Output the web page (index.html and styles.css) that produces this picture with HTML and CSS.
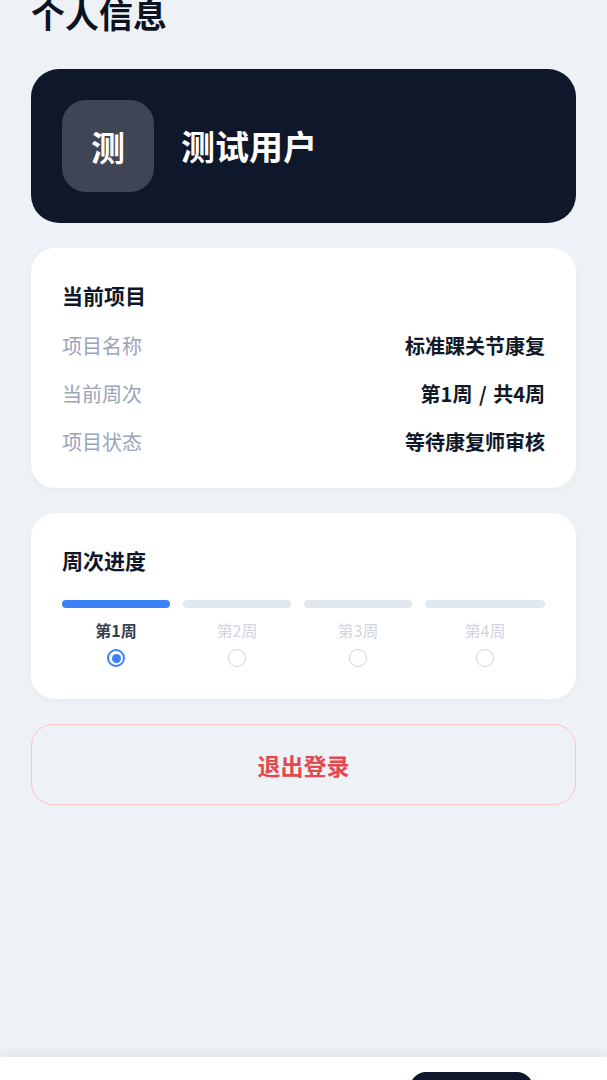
FILE: index.html
```html
<!DOCTYPE html>
<html lang="zh-CN">
<head>
<meta charset="utf-8">
<title>个人信息</title>
<link rel="stylesheet" href="styles.css">
</head>
<body>
<main class="page">
  <h1 class="page-title">个人信息</h1>

  <section class="profile-card">
    <div class="avatar">测</div>
    <div class="profile-name">测试用户</div>
  </section>

  <section class="card">
    <h2 class="card-title">当前项目</h2>
    <div class="rows">
      <div class="row"><span class="row-label">项目名称</span><span class="row-value">标准踝关节康复</span></div>
      <div class="row"><span class="row-label">当前周次</span><span class="row-value">第1周 / 共4周</span></div>
      <div class="row"><span class="row-label">项目状态</span><span class="row-value">等待康复师审核</span></div>
    </div>
  </section>

  <section class="card">
    <h2 class="card-title">周次进度</h2>
    <div class="weeks">
      <div class="week active"><div class="week-bar"></div><div class="week-label">第1周</div><div class="week-radio"></div></div>
      <div class="week"><div class="week-bar"></div><div class="week-label">第2周</div><div class="week-radio"></div></div>
      <div class="week"><div class="week-bar"></div><div class="week-label">第3周</div><div class="week-radio"></div></div>
      <div class="week"><div class="week-bar"></div><div class="week-label">第4周</div><div class="week-radio"></div></div>
    </div>
  </section>

  <button class="logout" type="button">退出登录</button>
</main>

<nav class="tabbar">
  <div class="tab-pill"></div>
</nav>
</body>
</html>
```

FILE: styles.css
```css
* { box-sizing: border-box; }

html, body {
  margin: 0;
  padding: 0;
  background: #eef2f7;
  font-family: "Noto Sans CJK SC", "Noto Sans", "Liberation Sans", sans-serif;
  color: #0f172a;
}

.page {
  padding: 0 31px 120px;
}

.page-title {
  margin: -3px 0 38px;
  font-size: 34px;
  line-height: 34px;
  font-weight: 700;
  color: #0b1220;
}

.profile-card {
  height: 154px;
  background: #0f172a;
  border-radius: 28px;
  padding: 0 31px;
  display: flex;
  align-items: center;
  gap: 27px;
}

.avatar {
  width: 92px;
  height: 92px;
  border-radius: 24px;
  background: #3f4555;
  color: #ffffff;
  font-size: 34px;
  font-weight: 700;
  display: flex;
  align-items: center;
  justify-content: center;
}

.profile-name {
  color: #ffffff;
  font-size: 34px;
  font-weight: 700;
  line-height: 40px;
}

.card {
  margin-top: 25px;
  background: #ffffff;
  border-radius: 24px;
  padding: 32px 31px 32px;
  box-shadow: 0 2px 10px rgba(15, 23, 42, 0.03);
}

.card-title {
  margin: 0 0 22px;
  font-size: 21px;
  line-height: 30px;
  font-weight: 700;
  color: #0f172a;
}

.rows {
  display: flex;
  flex-direction: column;
  gap: 20px;
}

.row {
  display: flex;
  justify-content: space-between;
  align-items: center;
  line-height: 28px;
  font-size: 20px;
}

.row-label {
  color: #9aa5b8;
}

.row-value {
  color: #111827;
  font-weight: 600;
  word-spacing: 2px;
}

.card-title + .weeks {
  margin-top: 25px;
}

.weeks {
  display: grid;
  grid-template-columns: 108px 108px 108px 1fr;
  column-gap: 13px;
}

.week {
  display: flex;
  flex-direction: column;
  align-items: center;
}

.week-bar {
  width: 100%;
  height: 8px;
  border-radius: 4px;
  background: #e2e8f0;
}

.week-label {
  margin-top: 11px;
  font-size: 16px;
  line-height: 22px;
  color: #cfd6e0;
}

.week-radio {
  margin-top: 8px;
  width: 18px;
  height: 18px;
  border-radius: 50%;
  border: 1.5px solid #cbd5e1;
  background: #ffffff;
  display: flex;
  align-items: center;
  justify-content: center;
}

.week.active .week-bar {
  background: #3b82f6;
}

.week.active .week-label {
  color: #374151;
  font-weight: 700;
}

.week.active .week-radio {
  border: 2px solid #3b82f6;
}

.week.active .week-radio::after {
  content: "";
  width: 9px;
  height: 9px;
  border-radius: 50%;
  background: #3b82f6;
}

.logout {
  display: block;
  width: 100%;
  height: 81px;
  margin-top: 25px;
  background: transparent;
  border: 1.5px solid #fbc4c4;
  border-radius: 22px;
  color: #e5484d;
  font-family: inherit;
  font-size: 23px;
  font-weight: 700;
}

.tabbar {
  position: fixed;
  left: 0;
  right: 0;
  bottom: 0;
  height: 23px;
  background: #ffffff;
  box-shadow: 0 -4px 12px rgba(15, 23, 42, 0.05);
  display: flex;
  justify-content: flex-end;
  align-items: flex-start;
  padding: 15px 74px 0 0;
  overflow: hidden;
}

.tab-pill {
  width: 123px;
  height: 40px;
  border-radius: 16px;
  background: #0f172a;
}
```
